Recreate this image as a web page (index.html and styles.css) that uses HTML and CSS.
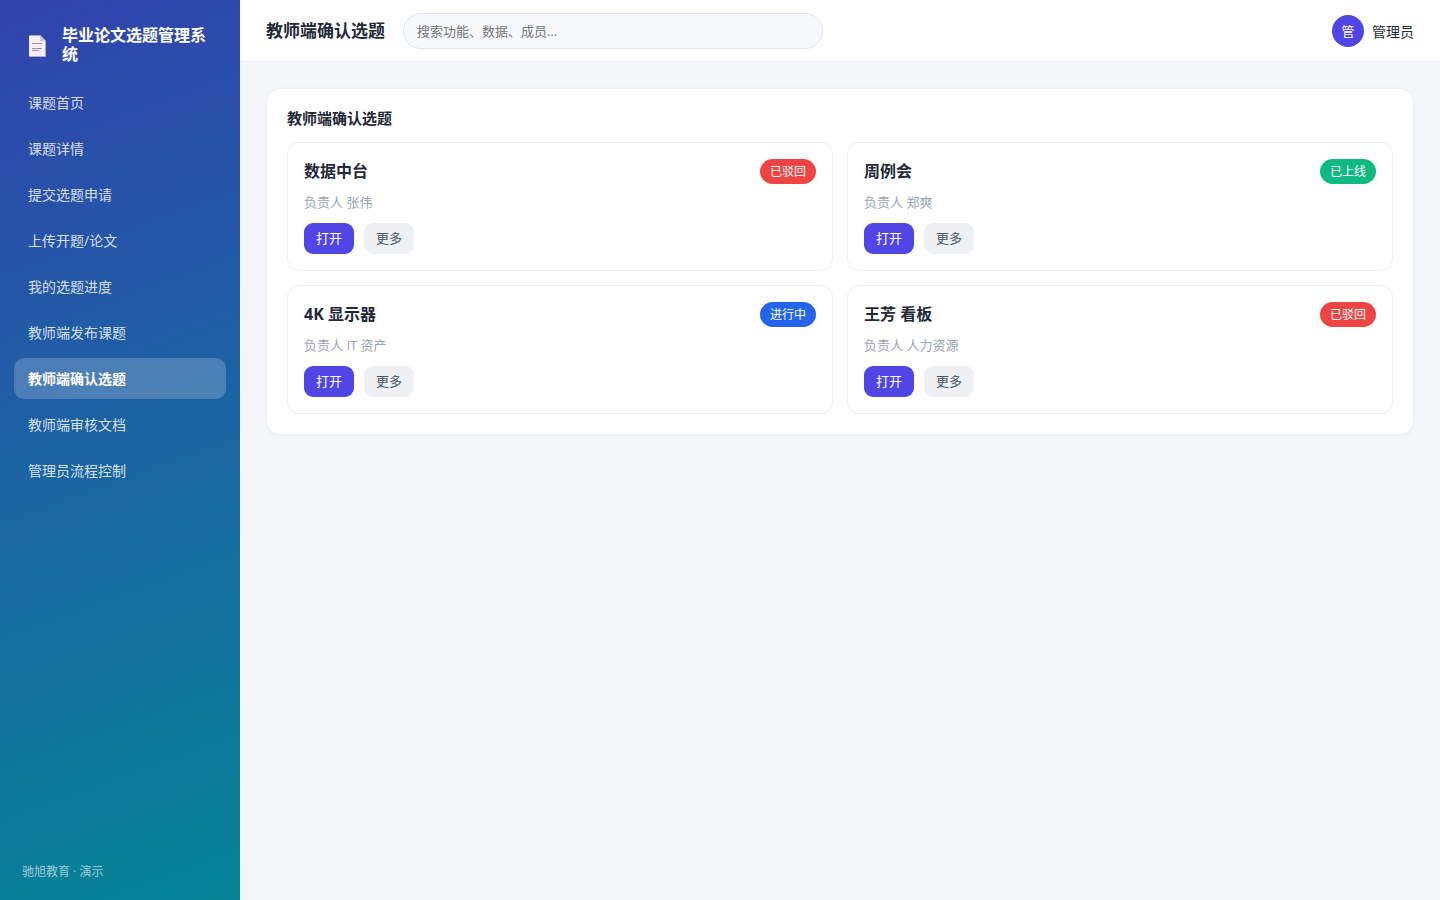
FILE: index.html
```html
<!DOCTYPE html>
<html lang="zh-CN">
<head>
  <meta charset="UTF-8" />
  <meta name="viewport" content="width=device-width, initial-scale=1.0"/>
  <title>教师端确认选题 - 毕业论文选题管理系统</title>
  <link rel="stylesheet" href="styles.css">
</head>
<body>
  <div class="app">
    <aside class="sidebar">
      <div class="brand">
        <svg class="brand-icon" viewBox="0 0 20 24" aria-hidden="true">
          <path d="M2 2H12L18 8V23a1 1 0 0 1-1 1H2a1 1 0 0 1-1-1V3a1 1 0 0 1 1-1z" fill="#b8a9c9"/>
          <path d="M2 3H12V8H17V23H1V3z" fill="#f3eef8"/>
          <path d="M12 2L18 8H13a1 1 0 0 1-1-1z" fill="#cdc4da"/>
          <path d="M4 10.5h10M4 15.5h10M4 17.5h7" stroke="#998ca8" stroke-width="1"/>
        </svg>
        <span>毕业论文选题管理系统</span>
      </div>
      <nav class="menu">
        <a href="#home">课题首页</a>
        <a href="#detail">课题详情</a>
        <a href="#apply">提交选题申请</a>
        <a href="#upload">上传开题/论文</a>
        <a href="#progress">我的选题进度</a>
        <a href="#publish">教师端发布课题</a>
        <a href="#confirm" class="active">教师端确认选题</a>
        <a href="#review">教师端审核文档</a>
        <a href="#control">管理员流程控制</a>
      </nav>
      <div class="sidebar-foot">驰旭教育 · 演示</div>
    </aside>

    <div class="main">
      <header class="topbar">
        <h1>教师端确认选题</h1>
        <input class="search" type="search" placeholder="搜索功能、数据、成员…" aria-label="搜索">
        <div class="user">
          <span class="avatar">管</span>
          <span>管理员</span>
        </div>
      </header>

      <main class="content">
        <section class="panel">
          <h2>教师端确认选题</h2>
          <div class="cards">
            <article class="card">
              <div class="card-head">
                <h3>数据中台</h3>
                <span class="badge red">已驳回</span>
              </div>
              <p>负责人 张伟</p>
              <div class="actions">
                <button class="btn primary">打开</button>
                <button class="btn">更多</button>
              </div>
            </article>
            <article class="card">
              <div class="card-head">
                <h3>周例会</h3>
                <span class="badge green">已上线</span>
              </div>
              <p>负责人 郑爽</p>
              <div class="actions">
                <button class="btn primary">打开</button>
                <button class="btn">更多</button>
              </div>
            </article>
            <article class="card">
              <div class="card-head">
                <h3>4K 显示器</h3>
                <span class="badge blue">进行中</span>
              </div>
              <p>负责人 IT 资产</p>
              <div class="actions">
                <button class="btn primary">打开</button>
                <button class="btn">更多</button>
              </div>
            </article>
            <article class="card">
              <div class="card-head">
                <h3>王芳 看板</h3>
                <span class="badge red">已驳回</span>
              </div>
              <p>负责人 人力资源</p>
              <div class="actions">
                <button class="btn primary">打开</button>
                <button class="btn">更多</button>
              </div>
            </article>
          </div>
        </section>
      </main>
    </div>
  </div>
</body>
</html>
```
FILE: styles.css
```css
* {
  box-sizing: border-box;
}
body {
  margin: 0;
  font-family: "Open Sans", "Noto Sans CJK SC", sans-serif;
  font-size: 14px;
  color: #1f2937;
  background: #f5f7fb;
}
h1, h2, h3, p {
  margin: 0;
}
.app {
  display: flex;
  min-height: 100vh;
}

/* Sidebar */
.sidebar {
  width: 240px;
  flex-shrink: 0;
  display: flex;
  flex-direction: column;
  padding: 18px 14px;
  color: white;
  background: linear-gradient(160deg, #3243ae, #058596);
}
.brand {
  display: flex;
  align-items: center;
  gap: 14px;
  padding: 8px 14px 18px;
  font-size: 16px;
  font-weight: 700;
  line-height: 19px;
}
.brand-icon {
  width: 20px;
  height: 24px;
  flex-shrink: 0;
}
.menu {
  display: flex;
  flex-direction: column;
  gap: 5px;
}
.menu a {
  padding: 11px 14px;
  line-height: 19px;
  color: rgba(255,255,255,0.82);
  text-decoration: none;
  border-radius: 10px;
}
.menu a:hover {
  background: rgba(255,255,255,0.1);
}
.menu a.active {
  color: white;
  font-weight: 700;
  background: rgba(255,255,255,0.2);
}
.sidebar-foot {
  margin-top: auto;
  padding: 0 8px;
  font-size: 12px;
  line-height: 20px;
  color: rgba(255,255,255,0.6);
}

/* Top bar */
.main {
  flex: 1;
  min-width: 0;
}
.topbar {
  display: flex;
  align-items: center;
  gap: 18px;
  height: 62px;
  padding: 0 26px;
  background: white;
  border-bottom: 1px solid #eceef2;
}
.topbar h1 {
  font-size: 17px;
  line-height: 24px;
}
.search {
  flex: 0 1 420px;
  min-width: 0;
  height: 36px;
  padding: 0 13px;
  font-family: inherit;
  font-size: 13px;
  color: inherit;
  background: #f7f8fc;
  border: 1px solid #e2e5ee;
  border-radius: 18px;
  -webkit-appearance: none;
  appearance: none;
}
.search::placeholder {
  color: #757575;
}
.user {
  display: flex;
  align-items: center;
  gap: 8px;
  margin-left: auto;
}
.avatar {
  display: grid;
  place-items: center;
  width: 32px;
  height: 32px;
  font-size: 13px;
  color: white;
  background: #4f46e5;
  border-radius: 50%;
}

/* Content */
.content {
  padding: 26px;
}
.panel {
  padding: 20px;
  background: white;
  border: 1px solid #eef0f3;
  border-radius: 14px;
  box-shadow: 0 1px 4px rgba(15,23,42,0.04);
}
.panel h2 {
  margin-bottom: 14px;
  font-size: 15px;
  line-height: 19px;
}
.cards {
  display: grid;
  grid-template-columns: repeat(2, 1fr);
  gap: 14px;
}
.card {
  padding: 16px;
  border: 1px solid #eef0f3;
  border-radius: 12px;
}
.card-head {
  display: flex;
  justify-content: space-between;
  align-items: center;
}
.card h3 {
  font-size: 16px;
  line-height: 25px;
}
.card p {
  margin: 8px 0 10px;
  font-size: 13px;
  line-height: 21px;
  color: #9aa3b2;
}
.badge {
  padding: 0 10px;
  font-size: 12px;
  line-height: 25px;
  color: white;
  border-radius: 13px;
}
.badge.red {
  background: #ef4444;
}
.badge.green {
  background: #10b981;
}
.badge.blue {
  background: #2563eb;
}
.actions {
  display: flex;
  gap: 10px;
}
.btn {
  padding: 0 12px;
  font-family: inherit;
  font-size: 13px;
  line-height: 31px;
  color: #475569;
  background: #eef0f4;
  border: none;
  border-radius: 9px;
  cursor: pointer;
}
.btn.primary {
  color: white;
  background: #4f46e5;
}
```
